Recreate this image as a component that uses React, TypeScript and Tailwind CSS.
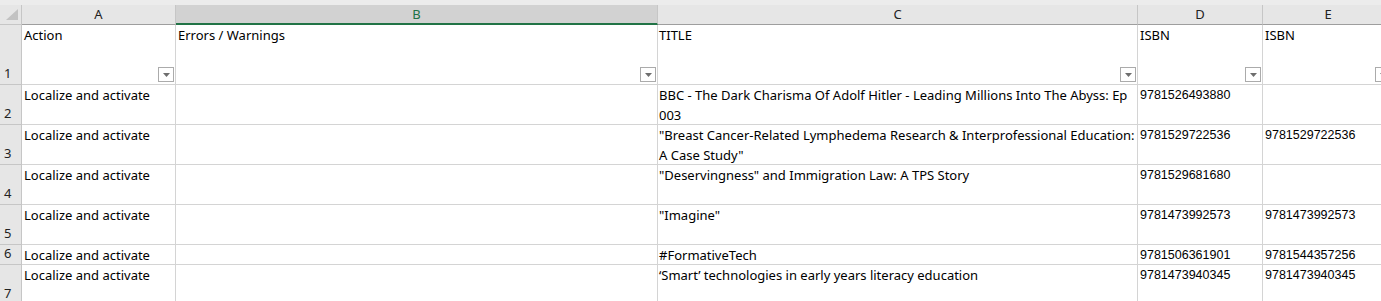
import React from "react";

const FONT = { fontFamily: '"Noto Sans", "Open Sans", sans-serif' };
const NUMFONT = { fontFamily: '"Liberation Sans", Arial, sans-serif', fontSize: "12.5px" };

type Row = { n: number; h: string; a: string; c: string[]; d: string; e: string };

const rows: Row[] = [
  { n: 2, h: "h-[40px]", a: "Localize and activate", c: ["BBC - The Dark Charisma Of Adolf Hitler - Leading Millions Into The Abyss: Ep", "003"], d: "9781526493880", e: "" },
  { n: 3, h: "h-[40px]", a: "Localize and activate", c: ['"Breast Cancer-Related Lymphedema Research & Interprofessional Education:', 'A Case Study"'], d: "9781529722536", e: "9781529722536" },
  { n: 4, h: "h-[40px]", a: "Localize and activate", c: ['"Deservingness" and Immigration Law: A TPS Story'], d: "9781529681680", e: "" },
  { n: 5, h: "h-[40px]", a: "Localize and activate", c: ['"Imagine"'], d: "9781473992573", e: "9781473992573" },
  { n: 6, h: "h-[20px]", a: "Localize and activate", c: ["#FormativeTech"], d: "9781506361901", e: "9781544357256" },
  { n: 7, h: "h-[40px]", a: "Localize and activate", c: ["\u2018Smart\u2019 technologies in early years literacy education"], d: "9781473940345", e: "9781473940345" },
];

function FilterBtn() {
  return (
    <div className="absolute right-[1px] bottom-[2px] w-[16px] h-[15px] bg-white border border-[#ababab] flex items-center justify-center">
      <svg width="7" height="4" viewBox="0 0 7 4">
        <path d="M0 0 L7 0 L3.5 4 Z" fill="#6e6e6e" />
      </svg>
    </div>
  );
}

const cell = "shrink-0 border-r border-b border-[#d4d4d4] overflow-hidden";

export default function App() {
  return (
    <div className="w-[1381px] h-[301px] overflow-hidden bg-white text-[13px] text-black" style={FONT}>
      {/* top strip */}
      <div className="h-[5px] bg-[#ececec]" />
      {/* column header */}
      <div className="flex h-[20px] bg-[#e6e6e6] text-[13px] leading-[19px] text-[#222]">
        <div className="relative w-[22px] shrink-0 border-r border-b border-[#c6c6c6]">
          <svg className="absolute left-0 top-0" width="21" height="19" viewBox="0 0 21 19">
            <path d="M18 4 L18 15 L6 15 Z" fill="#c2c2c2" />
          </svg>
        </div>
        <div className="w-[154px] shrink-0 border-r border-[#c6c6c6] border-b border-b-[#9e9e9e] text-center">A</div>
        <div className="w-[482px] shrink-0 bg-[#d2d2d2] border-r border-[#c6c6c6] border-b-2 border-b-[#217346] text-center text-[#217346]">B</div>
        <div className="w-[480px] shrink-0 border-r border-[#c6c6c6] border-b border-b-[#9e9e9e] text-center">C</div>
        <div className="w-[125px] shrink-0 border-r border-[#c6c6c6] border-b border-b-[#9e9e9e] text-center">D</div>
        <div className="w-[130px] shrink-0 border-b border-b-[#9e9e9e] text-center">E</div>
      </div>
      {/* row 1 */}
      <div className="flex h-[60px] leading-[20px]">
        <div className="w-[22px] shrink-0 bg-[#e6e6e6] border-r border-b border-[#c6c6c6] flex items-end pl-[4px] pb-[1px] text-[13px] text-[#222]">1</div>
        <div className={`${cell} relative w-[154px] pl-[2px]`}>Action<FilterBtn /></div>
        <div className={`${cell} relative w-[482px] pl-[2px]`}>Errors / Warnings<FilterBtn /></div>
        <div className={`${cell} relative w-[480px] pl-[1px]`}>TITLE<FilterBtn /></div>
        <div className={`${cell} relative w-[125px] pl-[2px]`}>ISBN<FilterBtn /></div>
        <div className={`${cell} relative w-[130px] pl-[2px]`}>ISBN<FilterBtn /></div>
      </div>
      {rows.map((r) => (
        <div key={r.n} className={`flex ${r.h} leading-[20px]`}>
          <div className="w-[22px] shrink-0 bg-[#e6e6e6] border-r border-b border-[#c6c6c6] flex items-end pl-[4px] pb-[1px] text-[13px] text-[#222]">{r.n}</div>
          <div className={`${cell} w-[154px] pl-[2px] whitespace-nowrap`}>{r.a}</div>
          <div className={`${cell} w-[482px]`} />
          <div className={`${cell} w-[480px] pl-[1px] whitespace-nowrap`}>
            {r.c.map((l, i) => (
              <div key={i}>{l}</div>
            ))}
          </div>
          <div className={`${cell} w-[125px] pl-[2px] whitespace-nowrap`} style={NUMFONT}>{r.d}</div>
          <div className={`${cell} w-[130px] pl-[2px] whitespace-nowrap`} style={NUMFONT}>{r.e}</div>
        </div>
      ))}
    </div>
  );
}
